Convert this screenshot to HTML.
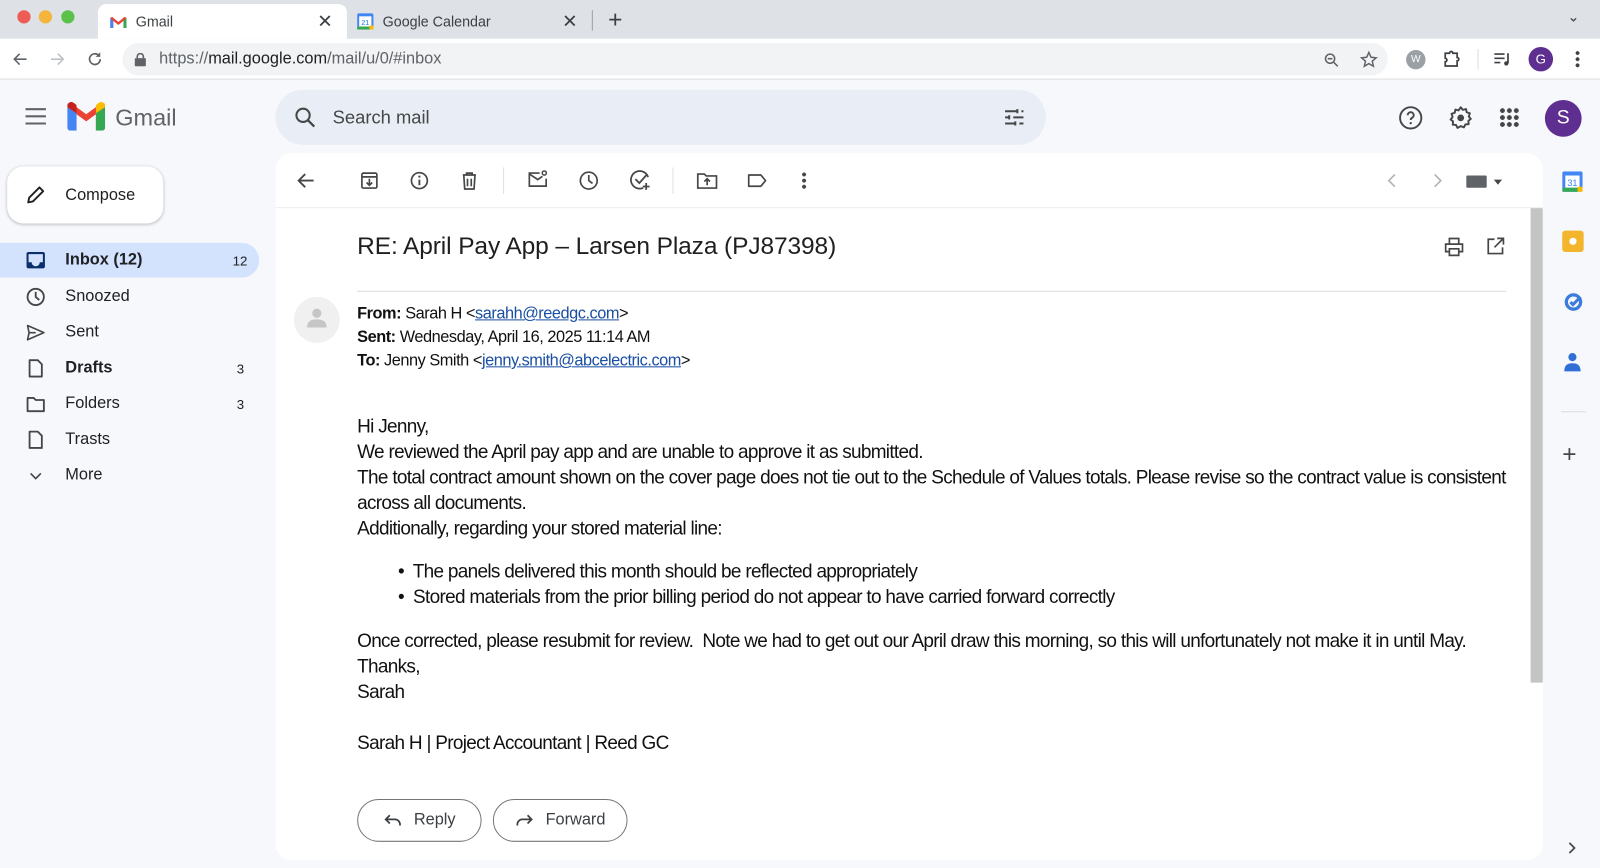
<!DOCTYPE html>
<html><head><meta charset="utf-8"><style>
*{box-sizing:border-box;margin:0;padding:0}
html,body{width:1600px;height:868px;overflow:hidden;background:#f6f8fc}
#w{width:1568px;height:851px;transform:scale(1.0204);transform-origin:0 0;position:relative;font-family:"Liberation Sans",Arial,sans-serif;color:#202124;background:#f6f8fc}
.abs{position:absolute}
.tabbar{left:0;top:0;width:1568px;height:38px;background:#dee1e6}
.tab{top:4px;height:34px;border-radius:8px 8px 0 0;font-size:14px;color:#3c4043;display:flex;align-items:center}
.addr{left:0;top:38px;width:1568px;height:40px;background:#fff;border-bottom:1px solid #dadce0}
.url{left:120px;top:4px;width:1240px;height:32px;border-radius:16px;background:#f1f3f4;font-size:16px;color:#5f6368;line-height:32px;padding-left:36px}
.nav{font-size:16px;color:#202124}
.nav .it{position:absolute;left:0;width:254px;height:34px;border-radius:0 17px 17px 0;display:flex;align-items:center}
.nav .it span.l{position:absolute;left:64px}
.nav .it span.c{position:absolute;left:228px;font-size:13px}
.nav svg{position:absolute;left:25px}
.card{left:270px;top:150px;width:1242px;height:693px;background:#fff;border-radius:16px;overflow:hidden}
.body{font-size:18.6px;letter-spacing:-0.68px;color:#111;line-height:25px}
a{color:#1a4fa3;text-decoration:underline}
.btn{top:783px;height:42px;border:1px solid #747775;border-radius:21px;font-size:16px;color:#3c4043;display:flex;align-items:center;justify-content:center;gap:12px}
</style></head><body><div id="w">
<div class="abs tabbar"></div>
<div class="abs" style="left:17px;top:10px;width:13px;height:13px;border-radius:50%;background:#ee5d55"></div>
<div class="abs" style="left:38px;top:10px;width:13px;height:13px;border-radius:50%;background:#f5b43d"></div>
<div class="abs" style="left:60px;top:10px;width:13px;height:13px;border-radius:50%;background:#5ac24a"></div>
<div class="abs tab" style="left:96px;width:244px;background:#fff;padding-left:12px">
<svg width="16" height="13" viewBox="0 0 16 12"><path d="M0 2v10h3V5l5 4 5-4v7h3V2l-2-1-6 5-6-5z" fill="#ea4335"/><path d="M0 2v10h3V5z" fill="#4285f4"/><path d="M13 5v7h3V2z" fill="#34a853"/></svg>
<span style="margin-left:9px">Gmail</span><span class="abs" style="right:14px;font-size:18px">✕</span></div>
<div class="abs tab" style="left:340px;width:240px;padding-left:10px">
<svg width="16" height="16"><rect x="0" y="0" width="16" height="16" rx="2" fill="#4285f4"/><rect x="2" y="3" width="12" height="10" fill="#fff"/><text x="8" y="11.5" font-size="7" text-anchor="middle" fill="#1a73e8" font-family="Liberation Sans">21</text><rect x="0" y="13" width="12" height="3" fill="#34a853"/><rect x="12" y="12" width="4" height="4" fill="#fbbc04"/></svg>
<span style="margin-left:9px">Google Calendar</span><span class="abs" style="right:14px;font-size:18px">✕</span></div>
<div class="abs" style="left:580px;top:10px;width:1px;height:20px;background:#9aa0a6"></div>
<div class="abs" style="left:596px;top:6px;font-size:24px;color:#3c4043">+</div>
<div class="abs" style="left:1536px;top:8px;font-size:14px;color:#3c4043">⌄</div>
<div class="abs addr">
<svg class="abs" style="left:11px;top:11px" width="18" height="18" viewBox="0 0 24 24"><path d="M20 12H5m6-7-7 7 7 7" stroke="#5f6368" stroke-width="2" fill="none"/></svg>
<svg class="abs" style="left:47px;top:11px" width="18" height="18" viewBox="0 0 24 24"><path d="M4 12h15m-6-7 7 7-7 7" stroke="#bdc1c6" stroke-width="2" fill="none"/></svg>
<svg class="abs" style="left:84px;top:11px" width="18" height="18" viewBox="0 0 24 24"><path d="M19 12a7 7 0 1 1-2-5" stroke="#5f6368" stroke-width="2.2" fill="none"/><path d="M19 3v6h-6z" fill="#5f6368"/></svg>
<div class="abs url"><svg class="abs" style="left:12px;top:10px" width="11" height="13" viewBox="0 0 11 13"><rect x="0" y="5" width="11" height="8" rx="1" fill="#5f6368"/><path d="M2.5 5V3.5a3 3 0 0 1 6 0V5" stroke="#5f6368" stroke-width="1.6" fill="none"/></svg>https://<span style="color:#202124">mail.google.com</span>/mail/u/0/#inbox
<svg class="abs" style="left:1176px;top:8px" width="18" height="18" viewBox="0 0 24 24"><circle cx="10" cy="10" r="6" stroke="#5f6368" stroke-width="2" fill="none"/><path d="M14.5 14.5 20 20M7 10h6" stroke="#5f6368" stroke-width="2"/></svg>
<svg class="abs" style="left:1212px;top:7px" width="19" height="19" viewBox="0 0 24 24"><path d="M12 3l2.7 6 6.3.6-4.8 4.2 1.4 6.3L12 16.8 6.4 20.1l1.4-6.3L3 9.6l6.3-.6z" stroke="#5f6368" stroke-width="1.8" fill="none"/></svg></div>
<div class="abs" style="left:1378px;top:11px;width:19px;height:19px;border-radius:50%;background:#9aa0a6;color:#fff;font-size:10px;text-align:center;line-height:19px">W</div>
<svg class="abs" style="left:1413px;top:10px" width="20" height="20" viewBox="0 0 24 24"><path d="M4 5h5a2 2 0 0 1 4 0h5v5a2 2 0 0 1 0 4v6H4v-5a2 2 0 0 0 0-4z" stroke="#3c4043" stroke-width="2" fill="none"/></svg>
<div class="abs" style="left:1448px;top:10px;width:1px;height:20px;background:#dadce0"></div>
<svg class="abs" style="left:1462px;top:10px" width="20" height="20" viewBox="0 0 24 24"><path d="M3 6h12M3 11h12M3 16h7" stroke="#3c4043" stroke-width="2"/><path d="M19 5v12" stroke="#3c4043" stroke-width="2"/><circle cx="17" cy="17" r="2.5" fill="#3c4043"/></svg>
<div class="abs" style="left:1498px;top:8px;width:24px;height:24px;border-radius:50%;background:#5e2e91;color:#fff;font-size:13px;text-align:center;line-height:24px">G</div>
<div class="abs" style="left:1544px;top:11px;width:4px;height:18px;background:radial-gradient(circle,#3c4043 1.8px,transparent 2px) 0 0/4px 6px"></div>
</div>

<svg class="abs" style="left:24px;top:104px" width="22" height="20" viewBox="0 0 22 20"><path d="M1 3h20M1 10h20M1 17h20" stroke="#5f6368" stroke-width="2"/></svg>
<svg class="abs" style="left:66px;top:100px" width="37" height="28" viewBox="0 0 37 28"><path d="M0 5v20a3 3 0 0 0 3 3h6V12l9.5 7L28 12v16h6a3 3 0 0 0 3-3V5l-5-3-13.5 10L5 2z" fill="#ea4335"/><path d="M0 5v20a3 3 0 0 0 3 3h6V11z" fill="#4285f4"/><path d="M28 11v17h6a3 3 0 0 0 3-3V5z" fill="#34a853"/><path d="M37 5l-9 6V3l2.5-2A4 4 0 0 1 37 5z" fill="#fbbc04"/><path d="M0 5l9 6V3L6.5 1A4 4 0 0 0 0 5z" fill="#c5221f"/></svg>
<div class="abs" style="left:113px;top:102px;font-size:23px;color:#5f6368">Gmail</div>
<div class="abs" style="left:270px;top:88px;width:755px;height:54px;border-radius:27px;background:#e9eef6"></div>
<svg class="abs" style="left:287px;top:103px" width="24" height="24" viewBox="0 0 24 24"><circle cx="10" cy="10" r="6.5" stroke="#444746" stroke-width="2" fill="none"/><path d="M15 15l6 6" stroke="#444746" stroke-width="2.2"/></svg>
<div class="abs" style="left:326px;top:105px;font-size:18px;color:#444746">Search mail</div>
<svg class="abs" style="left:982px;top:103px" width="24" height="24" viewBox="0 0 24 24"><path d="M3 6h12M19 6h2M3 12h4M11 12h10M3 18h10M17 18h4M15 4v4M7 10v4M13 16v4" stroke="#444746" stroke-width="2" fill="none"/></svg>
<svg class="abs" style="left:1370px;top:103px" width="25" height="25" viewBox="0 0 24 24"><circle cx="12" cy="12" r="10" stroke="#444746" stroke-width="1.8" fill="none"/><path d="M9.2 9.5a2.8 2.8 0 1 1 4 2.5c-.9.5-1.2 1-1.2 2" stroke="#444746" stroke-width="1.8" fill="none"/><circle cx="12" cy="17" r="1.1" fill="#444746"/></svg>
<svg class="abs" style="left:1419px;top:103px" width="25" height="25" viewBox="0 0 24 24"><path d="M12 2l2 2.5 3-.8.6 3 3 1-1 3 1.9 2.3-2.3 1.8.3 3.1-3.1.3-1.4 2.8-2.9-1.2L9 21.5l-1.4-2.8-3.1-.3.3-3.1L2.5 13.5 4.4 11.2l-1-3 3-1 .6-3 3 .8z" stroke="#444746" stroke-width="1.8" fill="none" stroke-linejoin="round"/><circle cx="12" cy="12" r="3.2" fill="#444746"/></svg>
<div class="abs" style="left:1469px;top:105px;width:20px;height:20px;background:radial-gradient(circle,#444746 2.2px,transparent 2.5px) 0 0/6.8px 6.8px"></div>
<div class="abs" style="left:1514px;top:98px;width:36px;height:36px;border-radius:50%;background:#5e2e91;color:#fff;font-size:19px;text-align:center;line-height:36px">S</div>

<div class="abs" style="left:7px;top:163px;width:153px;height:56px;border-radius:16px;background:#fff;box-shadow:0 1px 3px rgba(0,0,0,.25)"></div>
<svg class="abs" style="left:24px;top:180px" width="22" height="22" viewBox="0 0 24 24"><path d="M4 20l1-5L16 4l4 4L9 19z" stroke="#1f1f1f" stroke-width="2" fill="none" stroke-linejoin="round"/></svg>
<div class="abs" style="left:64px;top:183px;font-size:16px;color:#1f1f1f">Compose</div>

<div class="nav">
<div class="it" style="top:238px;background:#d3e3fd;font-weight:bold"><svg width="20" height="20" viewBox="0 0 20 20"><rect x="2" y="3" width="16" height="14" rx="1" stroke="#0b2f6b" stroke-width="2" fill="none"/><path d="M2 12h4a4 4 0 0 0 8 0h4v5H2z" fill="#0b2f6b"/></svg><span class="l">Inbox (12)</span><span class="c" style="font-weight:normal">12</span></div>
<div class="it" style="top:274px"><svg width="20" height="20" viewBox="0 0 20 20"><circle cx="10" cy="10" r="8" stroke="#444746" stroke-width="1.8" fill="none"/><path d="M10 5v5l3.5 3" stroke="#444746" stroke-width="1.8" fill="none"/></svg><span class="l">Snoozed</span></div>
<div class="it" style="top:309px"><svg width="20" height="20" viewBox="0 0 20 20"><path d="M2 3l16 7-16 7 1.5-7z M3.5 10H10" stroke="#444746" stroke-width="1.6" fill="none" stroke-linejoin="round"/></svg><span class="l">Sent</span></div>
<div class="it" style="top:344px;font-weight:bold"><svg width="20" height="20" viewBox="0 0 20 20"><path d="M4 2h8l4 4v12H4z" stroke="#444746" stroke-width="1.8" fill="none" stroke-linejoin="round"/></svg><span class="l">Drafts</span><span class="c" style="font-weight:normal;left:232px">3</span></div>
<div class="it" style="top:379px"><svg width="20" height="20" viewBox="0 0 20 20"><path d="M2 4h6l2 2h8v11H2z" stroke="#444746" stroke-width="1.8" fill="none" stroke-linejoin="round"/></svg><span class="l">Folders</span><span class="c" style="left:232px">3</span></div>
<div class="it" style="top:414px"><svg width="20" height="20" viewBox="0 0 20 20"><path d="M4 2h8l4 4v12H4z" stroke="#444746" stroke-width="1.8" fill="none" stroke-linejoin="round"/></svg><span class="l">Trasts</span></div>
<div class="it" style="top:449px"><svg width="20" height="20" viewBox="0 0 20 20"><path d="M5 8l5 5 5-5" stroke="#444746" stroke-width="1.6" fill="none"/></svg><span class="l">More</span></div>
</div>

<div class="abs card">
<div class="abs" style="left:0;top:53px;width:1242px;height:1px;background:#eceff1"></div>
<svg class="abs" style="left:19px;top:16px" width="22" height="22" viewBox="0 0 24 24"><path d="M20 12H5m6-7-7 7 7 7" stroke="#444746" stroke-width="2" fill="none"/></svg>
<svg class="abs" style="left:81px;top:16px" width="22" height="22" viewBox="0 0 24 24"><rect x="4" y="4" width="16" height="16" rx="1.5" stroke="#444746" stroke-width="1.8" fill="none"/><path d="M4 8h16M12 10v7M9 14l3 3 3-3" stroke="#444746" stroke-width="1.8" fill="none"/></svg>
<svg class="abs" style="left:130px;top:16px" width="22" height="22" viewBox="0 0 24 24"><circle cx="12" cy="12" r="8.5" stroke="#444746" stroke-width="1.8" fill="none"/><path d="M12 11v6" stroke="#444746" stroke-width="2"/><circle cx="12" cy="7.8" r="1.2" fill="#444746"/></svg>
<svg class="abs" style="left:179px;top:16px" width="22" height="22" viewBox="0 0 24 24"><path d="M5 6h14M9 6V4h6v2M6 6l1 15h10l1-15M10 10v8M14 10v8" stroke="#444746" stroke-width="1.8" fill="none"/></svg>
<div class="abs" style="left:223px;top:14px;width:1px;height:26px;background:#e0e0e0"></div>
<svg class="abs" style="left:246px;top:15px" width="22" height="22" viewBox="0 0 24 24"><path d="M14 5H3v14h18v-8M3 6l9 6 5-3.5" stroke="#444746" stroke-width="1.8" fill="none"/><circle cx="19" cy="5" r="2.2" stroke="#444746" stroke-width="1.6" fill="none"/></svg>
<svg class="abs" style="left:296px;top:16px" width="22" height="22" viewBox="0 0 24 24"><circle cx="12" cy="12" r="9" stroke="#444746" stroke-width="1.8" fill="none"/><path d="M12 6v6l4 3" stroke="#444746" stroke-width="1.8" fill="none"/></svg>
<svg class="abs" style="left:346px;top:15px" width="23" height="23" viewBox="0 0 24 24"><path d="M20 9a9 9 0 1 0-5 11" stroke="#444746" stroke-width="1.8" fill="none"/><path d="M7 11l4 4 8-9M18 15v7M14.5 18.5h7" stroke="#444746" stroke-width="1.8" fill="none"/></svg>
<div class="abs" style="left:389px;top:14px;width:1px;height:26px;background:#e0e0e0"></div>
<svg class="abs" style="left:412px;top:16px" width="22" height="22" viewBox="0 0 24 24"><path d="M2 5h7l2 2h11v13H2z" stroke="#444746" stroke-width="1.8" fill="none"/><path d="M12 10v7M9 13l3-3 3 3" stroke="#444746" stroke-width="1.8" fill="none"/></svg>
<svg class="abs" style="left:461px;top:16px" width="22" height="22" viewBox="0 0 24 24"><path d="M3 6h13l5 6-5 6H3z" stroke="#444746" stroke-width="1.8" fill="none" stroke-linejoin="round"/></svg>
<div class="abs" style="left:516px;top:18px;width:4px;height:18px;background:radial-gradient(circle,#444746 1.8px,transparent 2.1px) 0 0/4px 6px"></div>
<svg class="abs" style="left:1088px;top:19px" width="14" height="16" viewBox="0 0 14 16"><path d="M9 2L3 8l6 6" stroke="#b0b4b8" stroke-width="1.6" fill="none"/></svg>
<svg class="abs" style="left:1131px;top:19px" width="14" height="16" viewBox="0 0 14 16"><path d="M5 2l6 6-6 6" stroke="#b0b4b8" stroke-width="1.6" fill="none"/></svg>
<div class="abs" style="left:1167px;top:22px;width:20px;height:12px;background:#5f6368;border-radius:1px"></div>
<div class="abs" style="left:1194px;top:26px;width:0;height:0;border-left:4px solid transparent;border-right:4px solid transparent;border-top:5px solid #444746"></div>

<div class="abs" style="left:1230px;top:54px;width:12px;height:465px;background:#c4c4c4"></div>

<div class="abs" style="left:80px;top:78px;font-size:24px;letter-spacing:-0.1px;color:#1f1f1f">RE: April Pay App – Larsen Plaza (PJ87398)</div>
<svg class="abs" style="left:1144px;top:81px" width="22" height="22" viewBox="0 0 24 24"><path d="M7 8V3h10v5M7 17H3V9h18v8h-4M7 14h10v7H7z" stroke="#444746" stroke-width="1.8" fill="none"/></svg>
<svg class="abs" style="left:1185px;top:81px" width="21" height="21" viewBox="0 0 24 24"><path d="M11 4H4v16h16v-7M14 3h7v7M21 3l-10 10" stroke="#444746" stroke-width="1.9" fill="none"/></svg>
<div class="abs" style="left:80px;top:135px;width:1126px;height:1px;background:#dadce0"></div>
<div class="abs" style="left:18px;top:141px;width:45px;height:45px;border-radius:50%;background:#f0f0f0"></div>
<svg class="abs" style="left:30px;top:151px" width="21" height="22" viewBox="0 0 21 22"><circle cx="10.5" cy="6" r="4.5" fill="#c6c6c6"/><path d="M1 19c0-5 4-7 9.5-7s9.5 2 9.5 7v1H1z" fill="#c6c6c6"/></svg>

<div class="abs" style="left:80px;top:146px;font-size:16px;line-height:23px;color:#111;letter-spacing:-0.45px"><b>From:</b> Sarah H &lt;<a>sarahh@reedgc.com</a>&gt;<br><b>Sent:</b> Wednesday, April 16, 2025 11:14 AM<br><b>To:</b> Jenny Smith &lt;<a>jenny.smith@abcelectric.com</a>&gt;</div>

<div class="abs body" style="left:80px;top:255px;width:1140px">Hi Jenny,<br>We reviewed the April pay app and are unable to approve it as submitted.<br>The total contract amount shown on the cover page does not tie out to the Schedule of Values totals. Please revise so the contract value is consistent across all documents.<br>Additionally, regarding your stored material line:</div>
<div class="abs body" style="left:120px;top:397px;width:1100px">•&nbsp; The panels delivered this month should be reflected appropriately<br>•&nbsp; Stored materials from the prior billing period do not appear to have carried forward correctly</div>
<div class="abs body" style="left:80px;top:465px;width:1160px;white-space:pre">Once corrected, please resubmit for review.  Note we had to get out our April draw this morning, so this will unfortunately not make it in until May.
Thanks,
Sarah

Sarah H | Project Accountant | Reed GC</div>
</div>
<div class="abs btn" style="left:350px;width:122px"><svg width="18" height="14" viewBox="0 0 18 14"><path d="M6 2L2 6l4 4M2 6h9a5 5 0 0 1 5 5v1" stroke="#3c4043" stroke-width="1.7" fill="none"/></svg>Reply</div>
<div class="abs btn" style="left:483px;width:132px"><svg width="18" height="14" viewBox="0 0 18 14"><path d="M12 2l4 4-4 4M16 6H7a5 5 0 0 0-5 5v1" stroke="#3c4043" stroke-width="1.7" fill="none"/></svg>Forward</div>

<svg class="abs" style="left:1531px;top:168px" width="20" height="20" viewBox="0 0 20 20"><rect width="20" height="20" rx="2" fill="#4285f4"/><rect x="3" y="4" width="14" height="12" fill="#fff"/><text x="10" y="14.5" font-size="9" text-anchor="middle" fill="#4285f4" font-family="Liberation Sans">31</text><rect x="0" y="16" width="15" height="4" fill="#34a853"/><rect x="15" y="15" width="5" height="5" fill="#fbbc04"/></svg>
<div class="abs" style="left:1531px;top:226px;width:21px;height:21px;border-radius:3px;background:#f3b52c"></div>
<div class="abs" style="left:1538px;top:233px;width:7px;height:7px;border-radius:50%;background:#fff"></div>
<svg class="abs" style="left:1532px;top:286px" width="20" height="20" viewBox="0 0 20 20"><circle cx="10" cy="10" r="7" stroke="#3b7bdc" stroke-width="3.2" fill="none"/><path d="M7 10l2.5 2.5L17 5" stroke="#3b7bdc" stroke-width="3" fill="none"/></svg>
<svg class="abs" style="left:1532px;top:345px" width="18" height="20" viewBox="0 0 18 20"><circle cx="9" cy="5" r="4" fill="#2f6fd6"/><path d="M1 19c0-6 3-8 8-8s8 2 8 8z" fill="#2f6fd6"/></svg>
<div class="abs" style="left:1530px;top:403px;width:24px;height:1px;background:#dadce0"></div>
<div class="abs" style="left:1531px;top:432px;font-size:24px;color:#444746">+</div>
<svg class="abs" style="left:1536px;top:824px" width="10" height="14" viewBox="0 0 10 14"><path d="M2 2l5 5-5 5" stroke="#444746" stroke-width="1.7" fill="none"/></svg>
</div></body></html>
